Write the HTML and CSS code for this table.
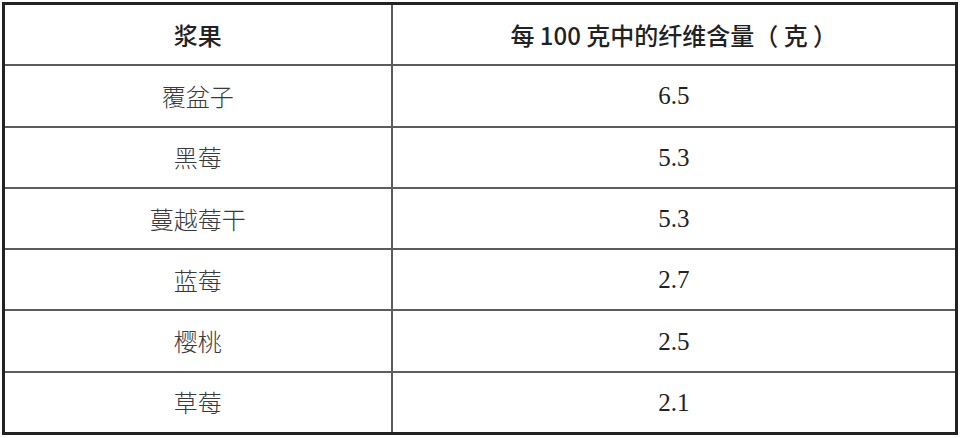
FILE: index.html
```html
<!DOCTYPE html>
<html lang="zh-CN">
<head>
<meta charset="utf-8">
<link rel="stylesheet" href="styles.css">
</head>
<body>
<table class="fiber">
  <colgroup>
    <col class="col-name">
    <col class="col-val">
  </colgroup>
  <thead>
    <tr><th>浆果</th><th>每 100 克中的纤维含量（ 克 ）</th></tr>
  </thead>
  <tbody>
    <tr><td class="name">覆盆子</td><td class="num">6.5</td></tr>
    <tr><td class="name">黑莓</td><td class="num">5.3</td></tr>
    <tr><td class="name">蔓越莓干</td><td class="num">5.3</td></tr>
    <tr><td class="name">蓝莓</td><td class="num">2.7</td></tr>
    <tr><td class="name">樱桃</td><td class="num">2.5</td></tr>
    <tr><td class="name">草莓</td><td class="num">2.1</td></tr>
  </tbody>
</table>
</body>
</html>
```

FILE: styles.css
```css
html, body {
  margin: 0;
  padding: 0;
  background: #ffffff;
}
body {
  padding: 2px 2px 0 2px;
}
.fiber {
  width: 956px;
  border-collapse: collapse;
  border: 3px solid #222222;
  table-layout: fixed;
}
.col-name { width: 388px; }
.fiber th,
.fiber td {
  border: 2px solid #5c5c5c;
  text-align: center;
  vertical-align: middle;
  padding: 0;
  height: 59.3px;
  line-height: 1;
}
.fiber th {
  font-family: "Noto Sans CJK SC", "Noto Sans", sans-serif;
  font-weight: 500;
  font-size: 24px;
  color: #222222;
}
.fiber td.name {
  font-family: "Noto Sans CJK SC", sans-serif;
  font-weight: 300;
  font-size: 24px;
  color: #3a3a3a;
}
.fiber td.num {
  font-family: "Liberation Serif", "Times New Roman", serif;
  font-size: 25px;
  color: #222222;
}
```
